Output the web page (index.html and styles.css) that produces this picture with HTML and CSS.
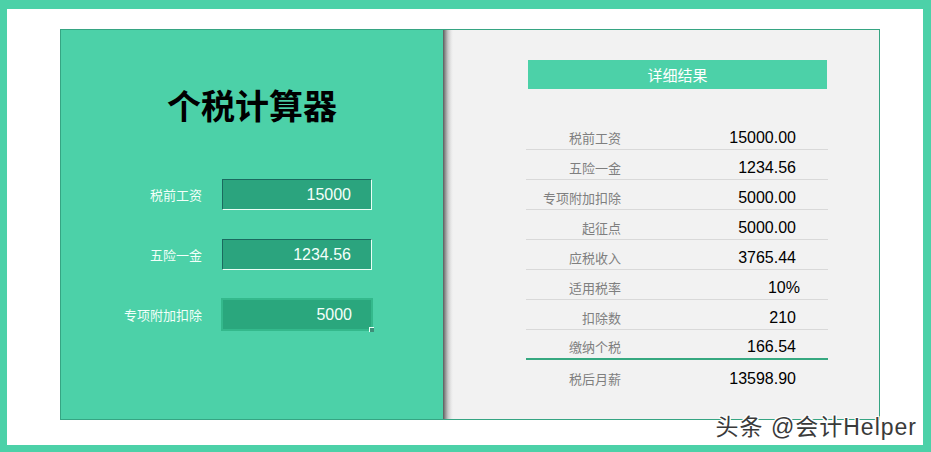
FILE: index.html
```html
<!DOCTYPE html>
<html lang="zh">
<head>
<meta charset="utf-8">
<link rel="stylesheet" href="styles.css">
</head>
<body>
<div class="frame">
  <div class="card">
    <section class="left">
      <h1 class="title">个税计算器</h1>
      <div class="form">
        <div class="label">税前工资</div>
        <div class="input">15000</div>
        <div class="label">五险一金</div>
        <div class="input">1234.56</div>
        <div class="label">专项附加扣除</div>
        <div class="input selected">5000<span class="handle"></span></div>
      </div>
    </section>
    <section class="right">
      <div class="head">详细结果</div>
      <div class="table">
        <div class="row"><span class="k">税前工资</span><span class="v">15000.00</span></div>
        <div class="row"><span class="k">五险一金</span><span class="v">1234.56</span></div>
        <div class="row"><span class="k">专项附加扣除</span><span class="v">5000.00</span></div>
        <div class="row"><span class="k">起征点</span><span class="v">5000.00</span></div>
        <div class="row"><span class="k">应税收入</span><span class="v">3765.44</span></div>
        <div class="row"><span class="k">适用税率</span><span class="v pct">10%</span></div>
        <div class="row"><span class="k">扣除数</span><span class="v">210</span></div>
        <div class="row green"><span class="k">缴纳个税</span><span class="v">166.54</span></div>
        <div class="row last"><span class="k">税后月薪</span><span class="v">13598.90</span></div>
      </div>
    </section>
  </div>
  <div class="watermark">头条 @会计Helper</div>
</div>
</body>
</html>
```
FILE: styles.css
```css
html, body {
  margin: 0;
  padding: 0;
}
body {
  background: #4cd1a8;
  width: 931px;
  height: 452px;
  overflow: hidden;
  font-family: "Liberation Sans", "Noto Sans CJK SC", sans-serif;
}
.frame {
  position: relative;
  margin: 9px 8px 0 7px;
  height: 436px;
  background: #ffffff;
  padding: 20px 0 0 53px;
  box-sizing: border-box;
}
.card {
  display: flex;
  width: 820px;
  height: 391px;
  border: 1px solid #36a583;
  box-sizing: border-box;
}
.left {
  width: 382px;
  background: #4cd1a8;
  display: flex;
  flex-direction: column;
  align-items: stretch;
}
.title {
  margin: 54px 0 0 0;
  text-align: center;
  font-family: "Noto Sans CJK SC", sans-serif;
  font-weight: 700;
  font-size: 34px;
  line-height: 42px;
  color: #000;
}
.form {
  margin-top: 53px;
  display: grid;
  grid-template-columns: 141px 150px;
  column-gap: 20px;
  row-gap: 29px;
  grid-auto-rows: 31px;
}
.label {
  text-align: right;
  color: #f2fff9;
  font-family: "Noto Sans CJK SC", sans-serif;
  font-size: 13px;
  line-height: 31px;
}
.input {
  position: relative;
  background: #2ba47e;
  border-top: 1px solid #1b6a5f;
  border-left: 1px solid #1b6a5f;
  border-right: 1px solid #eafff6;
  border-bottom: 1px solid #eafff6;
  box-sizing: border-box;
  text-align: right;
  padding-right: 20px;
  color: #f4fffa;
  font-size: 16px;
  line-height: 29px;
}
.input.selected {
  margin: -1px -1px -1px -1px;
  border: 2px solid #34b98c;
  background: #2aa77d;
  line-height: 29px;
  padding-right: 19px;
}
.handle {
  position: absolute;
  right: -3px;
  bottom: -3px;
  width: 4px;
  height: 4px;
  background: #3e8f79;
  border-top: 1px solid #e8fff6;
  border-left: 1px solid #e8fff6;
}
.right {
  flex: 1;
  background: linear-gradient(to right, #5a5a5a 0, #8a8a8a 2px, #c8c8c8 5px, #e8e8e8 8px, #f2f2f2 10px);
  padding: 30px 0 0 85px;
  box-sizing: border-box;
}
.head {
  width: 299px;
  height: 29px;
  background: #4cd1a8;
  color: #ffffff;
  text-align: center;
  font-family: "Noto Sans CJK SC", sans-serif;
  font-size: 15px;
  line-height: 29px;
}
.table {
  margin: 31px 0 0 -2px;
  width: 302px;
}
.row {
  display: grid;
  grid-template-columns: 95px 175px;
  height: 30px;
  border-bottom: 1px solid #d9d9d9;
  box-sizing: border-box;
  align-items: end;
}
.row.green {
  border-bottom: 2px solid #36a880;
}
.row.last {
  border-bottom: none;
}
.k {
  text-align: right;
  color: #7f7f7f;
  font-family: "Noto Sans CJK SC", sans-serif;
  font-size: 13px;
  line-height: 22px;
}
.v {
  text-align: right;
  color: #000;
  font-size: 16px;
  line-height: 22px;
}
.v.pct {
  margin-right: -4px;
}
.watermark {
  position: absolute;
  right: 6px;
  bottom: 3px;
  font-family: "Liberation Sans", "Noto Sans CJK SC", sans-serif;
  font-size: 23px;
  line-height: 30px;
  letter-spacing: 1px;
  color: #3a3a3a;
  text-shadow: -1px 0 #fff, 1px 0 #fff, 0 -1px #fff, 0 1px #fff, 1px 1px #fff, -1px -1px #fff, 1px -1px #fff, -1px 1px #fff;
}
```
